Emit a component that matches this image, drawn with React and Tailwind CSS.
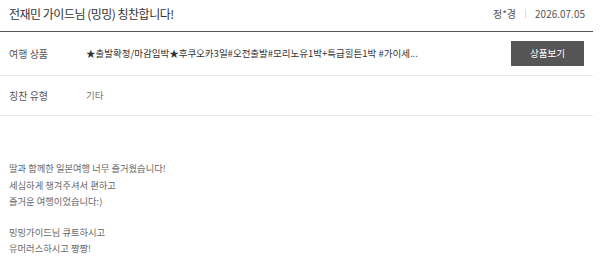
export default function App() {
  const font = { fontFamily: '"Noto Sans CJK KR", "Noto Sans", sans-serif' };
  return (
    <div className="w-[600px] h-[260px] overflow-hidden bg-white text-[#333]" style={font}>
      <div className="flex items-center justify-between h-[26px] pl-[9px] pr-[15px] pt-[1px]">
        <h1 className="text-[12px] text-[#333] tracking-[-0.5px]">전재민 가이드님 (밍밍) 칭찬합니다!</h1>
        <div className="flex items-center text-[10px] text-[#555]">
          <span>정*경</span>
          <span className="mx-[9px] h-[9px] w-px bg-[#ddd]" />
          <span className="text-[10px]">2026.07.05</span>
        </div>
      </div>
      <div className="mt-[5px] mr-[7px] border-t border-[#555]">
        <div className="flex items-center h-[44px] border-b border-[#e8e8e8]">
          <div className="w-[86px] pl-[9px] text-[10px] text-[#555]">여행 상품</div>
          <div className="flex-1 text-[9.5px] text-[#333]">★출발확정/마감임박★후쿠오카3일#오전출발#모리노유1박+특급힐튼1박 #가이세...</div>
          <button className="w-[73px] h-[25px] mr-[9px] bg-[#555] text-white text-[9.5px]">상품보기</button>
        </div>
        <div className="flex items-center h-[40px] border-b border-[#e8e8e8]">
          <div className="w-[86px] pl-[9px] text-[10px] text-[#555]">칭찬 유형</div>
          <div className="flex-1 text-[9.5px] text-[#777]">기타</div>
        </div>
      </div>
      <div className="pl-[9px] pt-[44px] text-[9.3px] leading-[16.5px] text-[#666]">
        <p>딸과 함께한 일본여행 너무 즐거웠습니다!</p>
        <p>세심하게 챙겨주셔서 편하고</p>
        <p>즐거운 여행이었습니다:)</p>
        <p className="mt-[14px]">밍밍가이드님 큐트하시고</p>
        <p>유머러스하시고 짱짱!</p>
      </div>
    </div>
  );
}
